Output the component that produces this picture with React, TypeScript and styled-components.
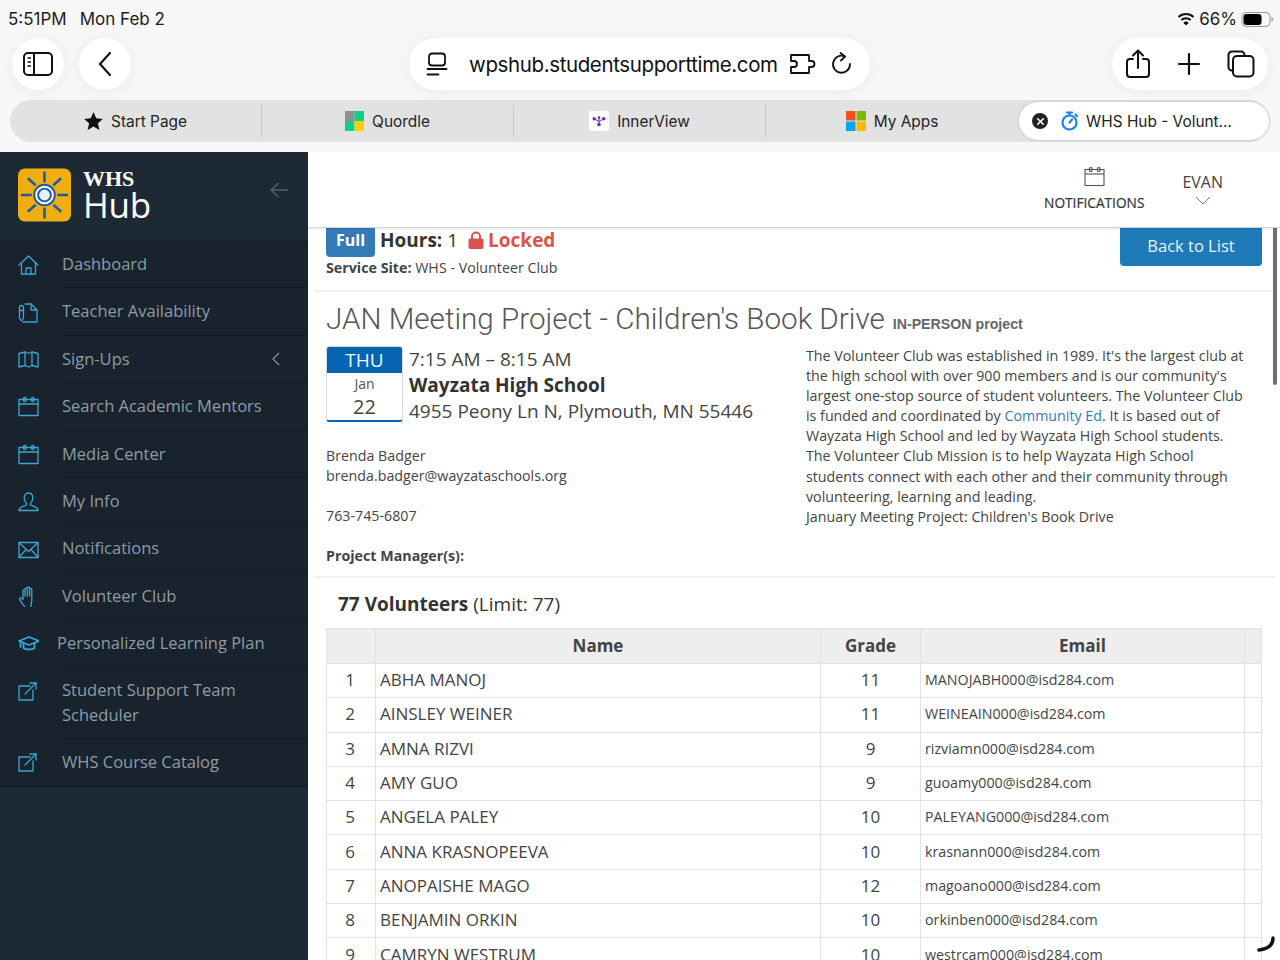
import React from "react";
import styled, { createGlobalStyle } from "styled-components";
import { X } from "lucide-react";

const Global = createGlobalStyle`
  html, body { margin: 0; padding: 0; background: #fff; }
  * { box-sizing: border-box; }
  #root { width: 1280px; height: 960px; overflow: hidden; }
`;

const Page = styled.div`
  position: relative;
  width: 1280px;
  height: 960px;
  overflow: hidden;
  display: flex;
  flex-direction: column;
  font-family: "Open Sans", sans-serif;
  color: #333;
`;

/* Browser chrome */
const Chrome = styled.div`
  height: 152px;
  flex: none;
  background: #f7f7f7;
  padding: 0 10px;
  font-family: Inter, "Liberation Sans", sans-serif;
  color: #111;
`;
const StatusBar = styled.div`
  height: 38px;
  margin: 0 -7px 0 -2px;
  display: flex;
  align-items: center;
  justify-content: space-between;
  font-size: 17px;
  color: #1c1c1c;
`;
const StatusGroup = styled.div<{ $gap: number }>`
  display: flex;
  align-items: center;
  gap: ${(p) => p.$gap}px;
`;
const Toolbar = styled.div`
  height: 52px;
  display: flex;
  align-items: center;
  justify-content: space-between;
  padding: 0 2px;
`;
const ToolGroup = styled.div`
  display: flex;
  gap: 15px;
`;
const RoundButton = styled.div`
  width: 52px;
  height: 52px;
  border-radius: 50%;
  background: #fff;
  display: flex;
  align-items: center;
  justify-content: center;
  box-shadow: 0 2px 14px rgba(0, 0, 0, 0.05);
`;
const UrlPill = styled.div`
  width: 461px;
  height: 52px;
  margin-left: 36px;
  border-radius: 26px;
  background: #fff;
  display: flex;
  align-items: center;
  padding: 0 16px 0 17px;
  box-shadow: 0 2px 14px rgba(0, 0, 0, 0.05);
`;
const UrlText = styled.span`
  font-size: 20.5px;
  letter-spacing: -0.38px;
  margin: 0 12px 0 20px;
  white-space: nowrap;
`;
const ActionPill = styled.div`
  width: 156px;
  height: 52px;
  border-radius: 26px;
  background: #fff;
  display: flex;
  align-items: center;
  justify-content: space-between;
  padding: 0 13px;
  box-shadow: 0 2px 14px rgba(0, 0, 0, 0.05);
`;
const TabBar = styled.div`
  margin-top: 10px;
  height: 42px;
  border-radius: 21px;
  background: #e2e2e2;
  display: flex;
  align-items: center;
`;
const Tab = styled.div<{ $active?: boolean; $last?: boolean }>`
  height: ${(p) => (p.$active ? "38px" : "32px")};
  width: ${(p) => (p.$active ? "250px" : "252px")};
  margin-left: ${(p) => (p.$active ? "1px" : "0")};
  padding-right: ${(p) => (p.$active ? "24px" : "0")};
  display: flex;
  align-items: center;
  justify-content: center;
  gap: 8px;
  font-size: 15.4px;
  color: #222;
  background: ${(p) => (p.$active ? "#fff" : "transparent")};
  border-radius: ${(p) => (p.$active ? "19px" : "0")};
  border-right: ${(p) => (p.$active || p.$last ? "none" : "1px solid #c6c6c6")};
  box-shadow: ${(p) => (p.$active ? "0 0 3px rgba(0,0,0,.18)" : "none")};
`;
const CloseDot = styled.span`
  width: 16px;
  height: 16px;
  border-radius: 50%;
  background: #222;
  color: #fff;
  display: flex;
  align-items: center;
  justify-content: center;
  margin-right: 5px;
`;

/* App */
const Body = styled.div`
  flex: 1;
  display: flex;
  min-height: 0;
`;
const Sidebar = styled.aside`
  width: 308px;
  flex: none;
  background: #1d2a36;
`;
const Brand = styled.div`
  height: 89px;
  display: flex;
  align-items: flex-start;
  padding: 16px 20px 0 18px;
  border-bottom: 1px solid #141d25;
  background: linear-gradient(to bottom, transparent 76px, #18242e 76px, #18242e 77px, transparent 77px);
`;
const BrandText = styled.div`
  margin-left: 12px;
  color: #fff;
  display: flex;
  flex-direction: column;
`;
const BrandTop = styled.span`
  font-family: "Liberation Serif", serif;
  font-weight: 700;
  font-size: 22px;
  line-height: 22px;
`;
const BrandMain = styled.span`
  font-size: 35px;
  line-height: 32px;
  font-weight: 400;
  margin-top: -1px;
  letter-spacing: -0.2px;
`;
const CollapseArrow = styled.div`
  margin-left: auto;
  margin-top: 13px;
`;
const Nav = styled.nav`
  background: #18232d;
  border-bottom: 1px solid #111a21;
`;
const NavItem = styled.div<{ $tall?: boolean }>`
  height: ${(p) => (p.$tall ? "71.4px" : "47.4px")};
  display: flex;
  align-items: stretch;
  padding-left: 17.5px;
`;
const NavIcon = styled.div`
  width: 21px;
  flex: none;
  display: flex;
  align-items: center;
`;
const NavIconTop = styled(NavIcon)`
  align-items: flex-start;
  padding-top: 13px;
`;
const NavLabel = styled.div<{ $indent?: number; $last?: boolean }>`
  flex: 1;
  margin-left: ${(p) => p.$indent ?? 23.5}px;
  padding-right: 28px;
  display: flex;
  align-items: center;
  justify-content: space-between;
  font-size: 16.5px;
  line-height: 24.5px;
  color: #8f9ca7;
  border-bottom: ${(p) => (p.$last ? "none" : "1px solid #111a21")};
`;

const Main = styled.main`
  flex: 1;
  min-width: 0;
  display: flex;
  flex-direction: column;
  background: #fff;
`;
const TopHeader = styled.header`
  height: 76px;
  flex: none;
  background: #fff;
  border-bottom: 1px solid #d6d6d6;
  box-shadow: 0 1px 2px rgba(0, 0, 0, 0.1);
  display: flex;
  justify-content: flex-end;
  align-items: flex-start;
  padding: 14px 57px 0 0;
  position: relative;
  z-index: 1;
`;
const NotifBlock = styled.div`
  display: flex;
  flex-direction: column;
  align-items: center;
  font-size: 13.7px;
  font-weight: 400;
  color: #333;
  gap: 6px;
  -webkit-text-stroke: 0.2px #333;
`;
const UserBlock = styled.div`
  margin-left: 38px;
  margin-top: 6px;
  display: flex;
  flex-direction: column;
  align-items: center;
  font-size: 16px;
  line-height: 20px;
  color: #444;
  gap: 4px;
`;
const Content = styled.div`
  padding: 0 5px 0 6px;
`;
const Panel = styled.div`
  padding: 0 12px;
  border-bottom: 2px solid #f1f1f1;
`;
const SummaryPanel = styled(Panel)`
  height: 64px;
  display: flex;
  justify-content: space-between;
  align-items: flex-start;
`;
const SummaryLine = styled.div`
  display: flex;
  align-items: flex-start;
  font-size: 19px;
  line-height: 24px;
`;
const FullBadge = styled.span`
  width: 49px;
  height: 29px;
  padding-bottom: 5px;
  background: #337ab7;
  color: #fff;
  font-size: 16px;
  font-weight: 700;
  border-radius: 0 0 4px 4px;
  display: flex;
  align-items: center;
  justify-content: center;
  margin-right: 5px;
`;
const Strong = styled.strong`
  font-weight: 700;
`;
const LockedLabel = styled.span`
  color: #d9534f;
  font-weight: 700;
  display: inline-flex;
  align-items: center;
  gap: 4px;
  margin-left: 10px;
`;
const SiteLine = styled.div`
  font-size: 14.25px;
  line-height: 20px;
  margin-top: 1px;
  color: #444;
`;
const BackButton = styled.button`
  width: 142px;
  height: 38px;
  margin-right: 1px;
  padding: 0 0 3px;
  border: none;
  background: #1f7ab8;
  color: #eaf3f9;
  font-family: "Open Sans", sans-serif;
  font-size: 16.5px;
  border-radius: 0 0 4px 4px;
`;
const DetailPanel = styled(Panel)`
  height: 286px;
  padding-top: 8px;
`;
const Title = styled.h1`
  margin: 0;
  font-family: Roboto, "Liberation Sans", sans-serif;
  font-weight: 300;
  font-size: 29.6px;
  line-height: 38px;
  color: #555;
  white-space: nowrap;
`;
const TitleSub = styled.small`
  font-family: "Liberation Sans", sans-serif;
  font-size: 14.2px;
  font-weight: 700;
  color: #666;
  margin-left: 8px;
`;
const DetailGrid = styled.div`
  margin-top: 3px;
  display: grid;
  grid-template-columns: 480px 445px;
`;
const EventRow = styled.div`
  display: flex;
  gap: 6px;
`;
const DateCard = styled.div`
  width: 77px;
  height: 76px;
  border: 1px solid #d8d8d8;
  border-bottom: 2px solid #0565b3;
  border-radius: 3px;
  display: flex;
  flex-direction: column;
  align-items: center;
  overflow: hidden;
`;
const DateDay = styled.div`
  width: 100%;
  height: 26px;
  flex: none;
  background: #0565b3;
  color: #f2f7fb;
  font-size: 19px;
  line-height: 26px;
  text-align: center;
`;
const DateMonth = styled.div`
  font-size: 14px;
  line-height: 22px;
  margin-top: 0;
  color: #555;
`;
const DateNum = styled.div`
  font-size: 20px;
  line-height: 24px;
  color: #444;
`;
const EventText = styled.div`
  font-size: 19px;
  line-height: 26px;
  color: #444;
  white-space: nowrap;
`;
const VenueName = styled.div`
  font-weight: 700;
  color: #333;
`;
const ContactBlock = styled.div`
  margin-top: 22px;
  font-size: 14.25px;
  line-height: 20px;
  color: #444;
`;
const ContactGap = styled.div`
  margin-top: 20px;
`;
const Description = styled.div`
  font-size: 14.25px;
  line-height: 20.1px;
  color: #444;
`;
const Link = styled.a`
  color: #337ab7;
`;
const VolunteerSection = styled.section`
  padding: 0 12px;
`;
const VolunteerHeading = styled.h2`
  margin: 14px 0 0 12px;
  height: 36px;
  font-size: 19px;
  line-height: 24px;
  font-weight: 400;
  color: #333;
`;
const Table = styled.div`
  width: 936px;
  border-left: 1px solid #e2e2e2;
  border-right: 1px solid #e2e2e2;
  border-top: 1px solid #e2e2e2;
  font-size: 17px;
  color: #444;
`;
const TableRow = styled.div<{ $head?: boolean }>`
  display: grid;
  grid-template-columns: 49px 445px 100px 324px 16px;
  height: ${(p) => (p.$head ? "35px" : "34.3px")};
  background: ${(p) => (p.$head ? "#eee" : "#fff")};
  border-bottom: 1px solid #e2e2e2;
`;
const Cell = styled.div<{ $center?: boolean; $small?: boolean; $bold?: boolean; $last?: boolean }>`
  display: flex;
  align-items: center;
  justify-content: ${(p) => (p.$center ? "center" : "flex-start")};
  padding: 0 ${(p) => (p.$center ? 0 : 4)}px 2px;
  border-right: ${(p) => (p.$last ? "none" : "1px solid #e2e2e2")};
  font-size: ${(p) => (p.$small ? "14.25px" : "17px")};
  font-weight: ${(p) => (p.$bold ? 700 : 400)};
  white-space: nowrap;
`;
const NumberCell = styled(Cell)`
  padding-right: 2px;
`;
const ScrollThumb = styled.div`
  position: absolute;
  left: 1273px;
  top: 181px;
  width: 4px;
  height: 204px;
  border-radius: 2px;
  background: #6f6f6f;
`;
const SpinnerMark = styled.svg`
  position: absolute;
  left: 1254px;
  top: 935px;
`;

const Stroke = { fill: "none", stroke: "currentColor", strokeWidth: 1.3, strokeLinecap: "round", strokeLinejoin: "round" } as const;

const IconBox = styled.svg`
  color: #3ca7cf;
  display: block;
`;

const ICONS: Record<string, React.ReactNode> = {
  home: <><path d="M1 11 10.5 2 20 11" /><path d="M3.5 9v11h14V9" /><path d="M8 20v-6h5v6" /></>,
  doc: <><path d="M7 2h6l6 6v12H5" /><path d="M13 2v6h6" /><path d="M1.5 5.5a2 2 0 0 1 4 0V16l-2 3-2-3Z" /><path d="M1.5 8.5h4" /></>,
  book: <><path d="M1 4.5 7 3l3.5 1.5L14 3l6 1.5V18l-6-1.5-3.5 1.500L7 16.5 1 18Z" /><path d="M7 3v13.5M14 3v13.5" /></>,
  calendar: <><rect x="1" y="3.5" width="19" height="16" /><path d="M1 8h19" /><rect x="5.5" y="1.5" width="2.5" height="4" rx="1" /><rect x="13.5" y="1.5" width="2.5" height="4" rx="1" /></>,
  user: <><path d="M10.5 2c2.8 0 4.3 2.2 4.3 5 0 2.5-1.3 4.3-2.3 5.3v1.700c2.500 1 7.500 1.800 7.500 5.500H1c0-3.700 5-4.500 7.500-5.500v-1.700C7.500 11.300 6.200 9.500 6.200 7c0-2.800 1.500-5 4.300-5Z" /></>,
  mail: <><rect x="1" y="3.5" width="19" height="15" /><path d="m1 3.5 9.5 9 9.5-9M1 18.5l7-8M20 18.5l-7-8" /></>,
  hand: <><path d="M6.5 20.500C5 18 1.500 14.500 1.500 13s2-1.500 3.500.5V5c0-1.500 2-1.500 2 0v5m0-7c0-1.500 2.300-1.500 2.300 0v7m0-8c0-1.500 2.300-1.500 2.300 0v8m0-6.500c0-1.500 2.200-1.500 2.200 0V14c0 2.500-1 4-1 6.500" /></>,
  cap: <g strokeWidth="1.8"><path d="M1 8 11 4l10 4-10 4Z" /><path d="M5.5 10.5V15c2 2 9 2 11 0v-4.500" /><path d="M2.500 8.500V14" /></g>,
  external: <><path d="M12 5H1v14h14V9" /><path d="M7 13 18 2" /><path d="M12 2h6v6" /></>,
};

const SvgIcon = ({ name }: { name: string }) => (
  <IconBox width="21" height="21" viewBox="0 0 21 21" {...Stroke}>{ICONS[name]}</IconBox>
);

const Logo = () => (
  <svg width="53" height="54" viewBox="0 0 54 54">
    <rect width="54" height="54" rx="7" fill="#f0ae13" />
    <g stroke="#1d5c9c" strokeWidth="2.6" strokeLinecap="butt">
      <path d="M27 3v11M27 40v11M3 27h11M40 27h11M10 10l8 7M44 10l-8 7M10 44l8-7M44 44l-8-7" />
    </g>
    <circle cx="27" cy="27" r="10.5" fill="#fff" stroke="#1d5c9c" strokeWidth="2" />
    <circle cx="27" cy="27" r="6.5" fill="#e8f2fb" stroke="#1d5c9c" strokeWidth="2" />
  </svg>
);

const volunteers: [string, string, string][] = [
  ["ABHA MANOJ", "11", "MANOJABH000@isd284.com"],
  ["AINSLEY WEINER", "11", "WEINEAIN000@isd284.com"],
  ["AMNA RIZVI", "9", "rizviamn000@isd284.com"],
  ["AMY GUO", "9", "guoamy000@isd284.com"],
  ["ANGELA PALEY", "10", "PALEYANG000@isd284.com"],
  ["ANNA KRASNOPEEVA", "10", "krasnann000@isd284.com"],
  ["ANOPAISHE MAGO", "12", "magoano000@isd284.com"],
  ["BENJAMIN ORKIN", "10", "orkinben000@isd284.com"],
  ["CAMRYN WESTRUM", "10", "westrcam000@isd284.com"],
];

const navItems = [
  { icon: "home", label: "Dashboard" },
  { icon: "doc", label: "Teacher Availability" },
  { icon: "book", label: "Sign-Ups", chevron: true },
  { icon: "calendar", label: "Search Academic Mentors" },
  { icon: "calendar", label: "Media Center" },
  { icon: "user", label: "My Info" },
  { icon: "mail", label: "Notifications" },
  { icon: "hand", label: "Volunteer Club" },
  { icon: "cap", label: "Personalized Learning Plan", indent: 18.5 },
];

const Favicons = {
  quordle: (
    <svg width="19" height="20" viewBox="0 0 19 20">
      <rect width="9.5" height="10" fill="#8f8f8f" />
      <rect x="9.5" width="9.5" height="10" fill="#0fcf88" />
      <rect y="10" width="9.5" height="10" fill="#0fcf88" />
      <rect x="9.5" y="10" width="9.5" height="10" fill="#fccf04" />
    </svg>
  ),
  inner: (
    <svg width="20" height="20" viewBox="0 0 20 20">
      <rect width="20" height="20" rx="3" fill="#fff" />
      <path d="M5.5 8 10 10.5 14.5 8M10 6.5V14" stroke="#6b2fa0" strokeWidth="1" fill="none" />
      <g fill="#6b2fa0">
        <circle cx="5.2" cy="7.8" r="1.7" />
        <circle cx="14.8" cy="7.8" r="1.7" />
        <circle cx="10" cy="6.5" r="1.3" />
        <circle cx="10" cy="13.5" r="1.8" />
      </g>
    </svg>
  ),
  ms: (
    <svg width="20" height="20" viewBox="0 0 20 20">
      <rect width="9.5" height="9.5" fill="#f25022" />
      <rect x="10.5" width="9.5" height="9.5" fill="#7fba00" />
      <rect y="10.5" width="9.5" height="9.5" fill="#00a4ef" />
      <rect x="10.5" y="10.5" width="9.5" height="9.5" fill="#ffb900" />
    </svg>
  ),
};

export default function App() {
  return (
    <Page>
      <Global />
      <Chrome>
        <StatusBar>
          <StatusGroup $gap={13}>
            <span>5:51PM</span>
            <span>Mon Feb 2</span>
          </StatusGroup>
          <StatusGroup $gap={4}>
            <svg width="18" height="14" viewBox="0 0 18 14" fill="none" stroke="#111" strokeWidth="2" strokeLinecap="butt">
              <path d="M1.5 5a11 11 0 0 1 15 0" />
              <path d="M4.3 8a7 7 0 0 1 9.4 0" />
              <path d="M9 13 6.8 10.8a3.2 3.2 0 0 1 4.4 0Z" fill="#111" strokeWidth="1" />
            </svg>
            <span>66%</span>
            <svg width="36" height="16" viewBox="0 0 36 16">
              <rect x="1" y="1.5" width="28" height="14" rx="4" fill="none" stroke="#999" strokeWidth="1" />
              <rect x="2.5" y="3" width="18" height="11" rx="3" fill="#000" />
              <path d="M30.5 6v5c1-.3 1.5-1.3 1.5-2.5S31.5 6.300 30.5 6Z" fill="#999" />
            </svg>
          </StatusGroup>
        </StatusBar>
        <Toolbar>
          <ToolGroup>
            <RoundButton>
              <svg width="30" height="24" viewBox="0 0 30 24" fill="none" stroke="#111" strokeWidth="2">
                <rect x="1" y="1" width="28" height="22" rx="4" />
                <path d="M11 1v22" />
                <path d="M4.5 6H8M4.5 10H8M4.5 14H8" strokeWidth="1.5" />
              </svg>
            </RoundButton>
            <RoundButton>
              <svg width="16" height="26" viewBox="0 0 16 26" fill="none" stroke="#111" strokeWidth="2.2" strokeLinecap="round" strokeLinejoin="round">
                <path d="M13 2 3 13l10 11" />
              </svg>
            </RoundButton>
          </ToolGroup>
          <UrlPill>
            <svg width="23" height="24" viewBox="0 0 23 24" fill="none" stroke="#111" strokeWidth="1.8" strokeLinecap="round">
              <rect x="3" y="1.5" width="16" height="12" rx="3" />
              <path d="M1.5 17h19M1.5 22.5h11" />
            </svg>
            <UrlText>wpshub.studentsupporttime.com</UrlText>
            <svg width="26" height="24" viewBox="0 0 26 24" fill="none" stroke="#111" strokeWidth="1.8" strokeLinejoin="round">
              <path d="M1 3h18v6h2.500a3 3 0 0 1 0 6H19v6H1v-6h3a3 3 0 0 0 0-6H1Z" />
            </svg>
            <svg width="22" height="24" viewBox="0 0 22 24" fill="none" stroke="#111" strokeWidth="1.8" strokeLinecap="round" strokeLinejoin="round" style={{ marginLeft: 15 }}>
              <path d="M14 4.5A8.5 8.5 0 1 0 19 12" />
              <path d="M9.5 1 14 4.5 10 8.5" />
            </svg>
          </UrlPill>
          <ActionPill>
            <svg width="26" height="30" viewBox="0 0 26 30" fill="none" stroke="#111" strokeWidth="2" strokeLinecap="round" strokeLinejoin="round">
              <path d="M8 10H5a3 3 0 0 0-3 3v12a3 3 0 0 0 3 3h16a3 3 0 0 0 3-3V13a3 3 0 0 0-3-3h-3" />
              <path d="M13 19V2M8 6.5 13 1.5l5 5" />
            </svg>
            <svg width="24" height="24" viewBox="0 0 24 24" fill="none" stroke="#111" strokeWidth="2.2" strokeLinecap="round">
              <path d="M12 2v20M2 12h20" />
            </svg>
            <svg width="28" height="28" viewBox="0 0 28 28" fill="none" stroke="#111" strokeWidth="2">
              <path d="M5.5 20.5H5a3.5 3.5 0 0 1-3.5-3.5V5A3.5 3.5 0 0 1 5 1.5h9A3.5 3.5 0 0 1 17.5 5v.5" />
              <rect x="6" y="6" width="20.5" height="20.5" rx="4" />
            </svg>
          </ActionPill>
        </Toolbar>
        <TabBar>
          <Tab>
            <svg width="19" height="18" viewBox="0 0 24 23" fill="#111">
              <path d="m12 0 3.5 8 8.5.8-6.4 5.7 1.9 8.5L12 18.6 4.5 23l1.900-8.5L0 8.800 8.500 8Z" />
            </svg>
            <span>Start Page</span>
          </Tab>
          <Tab>{Favicons.quordle}<span>Quordle</span></Tab>
          <Tab>{Favicons.inner}<span>InnerView</span></Tab>
          <Tab $last>{Favicons.ms}<span>My Apps</span></Tab>
          <Tab $active>
            <CloseDot><X size={11} strokeWidth={3.5} /></CloseDot>
            <svg width="17" height="20" viewBox="0 0 17 20" fill="none" stroke="#1a82f2" strokeWidth="2.2" strokeLinecap="round">
              <circle cx="8.5" cy="11.5" r="7" />
              <path d="M6 1.5h5M8.5 1.500v2.500M14.500 3.500l1.500 1.500M8.500 11.500 11 8.500" />
            </svg>
            <span>WHS Hub - Volunt...</span>
          </Tab>
        </TabBar>
      </Chrome>
      <Body>
        <Sidebar>
          <Brand>
            <Logo />
            <BrandText>
              <BrandTop>WHS</BrandTop>
              <BrandMain>Hub</BrandMain>
            </BrandText>
            <CollapseArrow>
              <svg width="18" height="16" viewBox="0 0 18 16" fill="none" stroke="#4a6478" strokeWidth="1.3">
                <path d="M18 8H1M8.5 1 1 8l7.5 7" />
              </svg>
            </CollapseArrow>
          </Brand>
          <Nav>
            {navItems.map((item) => (
              <NavItem key={item.label}>
                <NavIcon><SvgIcon name={item.icon} /></NavIcon>
                <NavLabel $indent={item.indent}>
                  <span>{item.label}</span>
                  {item.chevron && (
                    <svg width="8" height="14" viewBox="0 0 8 14" fill="none" stroke="#8f9ca7" strokeWidth="1.1">
                      <path d="M7 1 1 7l6 6" />
                    </svg>
                  )}
                </NavLabel>
              </NavItem>
            ))}
            <NavItem $tall>
              <NavIconTop><SvgIcon name="external" /></NavIconTop>
              <NavLabel>
                <span>Student Support Team<br />Scheduler</span>
              </NavLabel>
            </NavItem>
            <NavItem>
              <NavIcon><SvgIcon name="external" /></NavIcon>
              <NavLabel $last>
                <span>WHS Course Catalog</span>
              </NavLabel>
            </NavItem>
          </Nav>
        </Sidebar>
        <Main>
          <TopHeader>
            <NotifBlock>
              <svg width="21" height="21" viewBox="0 0 21 21" fill="none" stroke="#4c5660" strokeWidth="1.1">
                <rect x="1" y="3.5" width="19" height="16" />
                <path d="M1 8h19" />
                <rect x="5.5" y="1.5" width="2.5" height="4" rx="1" />
                <rect x="13.5" y="1.5" width="2.5" height="4" rx="1" />
              </svg>
              <span>NOTIFICATIONS</span>
            </NotifBlock>
            <UserBlock>
              <span>EVAN</span>
              <svg width="16" height="9" viewBox="0 0 16 9" fill="none" stroke="#6a7680" strokeWidth="1">
                <path d="m1 1 7 7 7-7" />
              </svg>
            </UserBlock>
          </TopHeader>
          <Content>
            <SummaryPanel>
              <div>
                <SummaryLine>
                  <FullBadge>Full</FullBadge>
                  <span><Strong>Hours:</Strong> 1</span>
                  <LockedLabel>
                    <svg width="16" height="18" viewBox="0 0 16 18">
                      <path d="M4 8V5.5a4 4 0 0 1 8 0V8" fill="none" stroke="#d9534f" strokeWidth="2" />
                      <rect x="0.5" y="7.5" width="15" height="10.5" rx="2" fill="#d9534f" />
                    </svg>
                    Locked
                  </LockedLabel>
                </SummaryLine>
                <SiteLine><Strong>Service Site:</Strong> WHS - Volunteer Club</SiteLine>
              </div>
              <BackButton>Back to List</BackButton>
            </SummaryPanel>
            <DetailPanel>
              <Title>JAN Meeting Project - Children's Book Drive<TitleSub>IN-PERSON project</TitleSub></Title>
              <DetailGrid>
                <div>
                  <EventRow>
                    <DateCard>
                      <DateDay>THU</DateDay>
                      <DateMonth>Jan</DateMonth>
                      <DateNum>22</DateNum>
                    </DateCard>
                    <EventText>
                      <div>7:15 AM – 8:15 AM</div>
                      <VenueName>Wayzata High School</VenueName>
                      <div>4955 Peony Ln N, Plymouth, MN 55446</div>
                    </EventText>
                  </EventRow>
                  <ContactBlock>
                    <div>Brenda Badger</div>
                    <div>brenda.badger@wayzataschools.org</div>
                    <ContactGap>763-745-6807</ContactGap>
                    <ContactGap><Strong>Project Manager(s):</Strong></ContactGap>
                  </ContactBlock>
                </div>
                <Description>
                  The Volunteer Club was established in 1989. It's the largest club at the high school with over 900 members and is our community's largest one-stop source of student volunteers. The Volunteer Club is funded and coordinated by <Link>Community Ed</Link>. It is based out of Wayzata High School and led by Wayzata High School students. The Volunteer Club Mission is to help Wayzata High School students connect with each other and their community through volunteering, learning and leading.<br />
                  January Meeting Project: Children's Book Drive
                </Description>
              </DetailGrid>
            </DetailPanel>
            <VolunteerSection>
              <VolunteerHeading><Strong>77 Volunteers</Strong> (Limit: 77)</VolunteerHeading>
              <Table>
                <TableRow $head>
                  <Cell />
                  <Cell $center $bold>Name</Cell>
                  <Cell $center $bold>Grade</Cell>
                  <Cell $center $bold>Email</Cell>
                  <Cell $last />
                </TableRow>
                {volunteers.map((v, i) => (
                  <TableRow key={v[0]}>
                    <NumberCell $center>{i + 1}</NumberCell>
                    <Cell>{v[0]}</Cell>
                    <Cell $center>{v[1]}</Cell>
                    <Cell $small>{v[2]}</Cell>
                    <Cell $last />
                  </TableRow>
                ))}
              </Table>
            </VolunteerSection>
          </Content>
        </Main>
      </Body>
      <ScrollThumb />
      <SpinnerMark width="24" height="22" viewBox="0 0 24 22" fill="none" stroke="#111" strokeWidth="3.5" strokeLinecap="round">
        <path d="M19 3c0 7-5 11-14 12" />
      </SpinnerMark>
    </Page>
  );
}
